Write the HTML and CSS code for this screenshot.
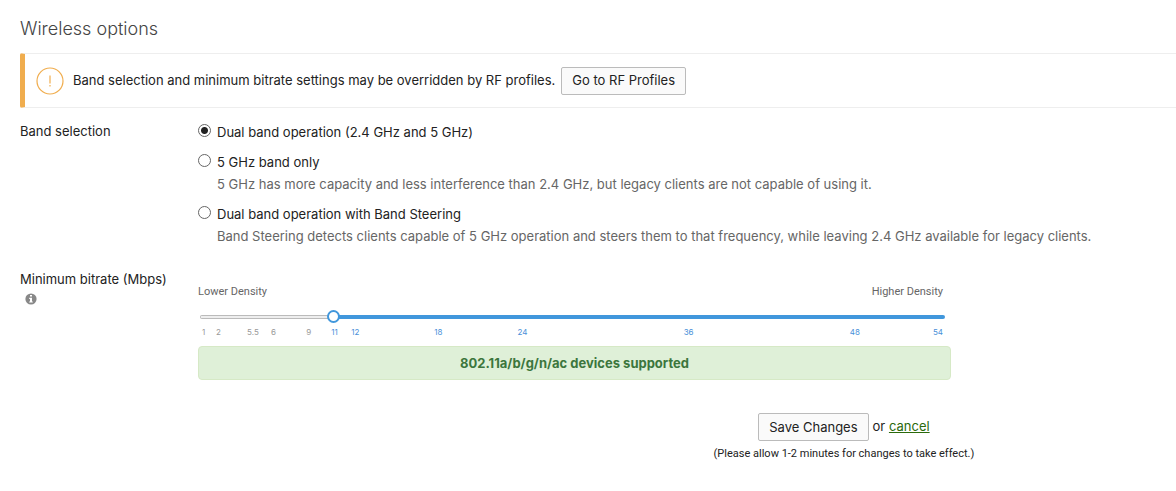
FILE: index.html
```html
<!DOCTYPE html>
<html lang="en">
<head>
    <meta charset="UTF-8">
    <meta name="viewport" content="width=device-width, initial-scale=1.0">
    <title>Wireless options</title>
    <link rel="stylesheet" href="styles.css">
</head>
<body>

    <h1>Wireless options</h1>

    <div class="notice">
        <svg class="notice-icon" viewBox="0 0 28 28" aria-hidden="true">
            <circle cx="14" cy="14" r="13" fill="none" stroke="#f0ad4e" stroke-width="1.2"/>
            <path d="M14 8.5v8M14 18v1.6" stroke="#f0ad4e" stroke-width="1.2"/>
        </svg>
        <span class="notice-text">Band selection and minimum bitrate settings may be overridden by RF profiles.</span>
        <button type="button" class="button">Go to RF Profiles</button>
    </div>

    <form class="options">
        <div class="row band-row">
            <div class="row-label" id="bandLabel">Band selection</div>
            <div class="band-list" role="radiogroup" aria-labelledby="bandLabel">
                <div class="band">
                    <input type="radio" name="band" id="bandDual" checked>
                    <label for="bandDual">Dual band operation (2.4 GHz and 5 GHz)</label>
                </div>
                <div class="band">
                    <input type="radio" name="band" id="bandFive">
                    <label for="bandFive">5 GHz band only</label>
                    <p class="help">5 GHz has more capacity and less interference than 2.4 GHz, but legacy clients are not capable of using it.</p>
                </div>
                <div class="band">
                    <input type="radio" name="band" id="bandSteering">
                    <label for="bandSteering">Dual band operation with Band Steering</label>
                    <p class="help">Band Steering detects clients capable of 5 GHz operation and steers them to that frequency, while leaving 2.4 GHz available for legacy clients.</p>
                </div>
            </div>
        </div>

        <div class="row">
            <div class="row-label">
                <label for="bitrate">Minimum bitrate (Mbps)</label>
                <svg class="info-icon" viewBox="0 0 12 12" aria-hidden="true">
                    <circle cx="6" cy="6" r="5.6" fill="#888"/>
                    <path d="M5 2h2v1.6H5zM4.2 4.8H7v3.6h.8v1.2H4.2V8.4H5V6h-.8z" fill="#fff"/>
                </svg>
            </div>
            <div class="bitrate">
                <div class="density">
                    <span>Lower Density</span>
                    <span>Higher Density</span>
                </div>
                <input type="range" class="slider" id="bitrate" min="2" max="54" value="11">
                <div class="ticks">
                    <span>1</span>
                    <span>2</span>
                    <span>5.5</span>
                    <span>6</span>
                    <span>9</span>
                    <span class="on">11</span>
                    <span class="on">12</span>
                    <span class="on">18</span>
                    <span class="on">24</span>
                    <span class="on">36</span>
                    <span class="on">48</span>
                    <span class="on">54</span>
                </div>
                <div class="supported">802.11a/b/g/n/ac devices supported</div>
            </div>
        </div>

        <div class="actions">
            <div class="actions-line">
                <button type="submit" class="button">Save Changes</button>
                <span>or <a href="#">cancel</a></span>
            </div>
            <div class="actions-note">(Please allow 1-2 minutes for changes to take effect.)</div>
        </div>
    </form>

</body>
</html>
```

FILE: styles.css
```css
* {
    box-sizing: border-box;
}

body {
    margin: 0;
    padding: 17px 0 16px 20px;
    background-color: #fff;
    color: #222;
    font-family: Inter, "Liberation Sans", sans-serif;
    font-size: 13px;
    line-height: 20px;
}

h1 {
    margin: 0 0 12px;
    color: #444;
    font-size: 18px;
    font-weight: 300;
    line-height: 24px;
}

.button {
    height: 28px;
    padding: 0 10px 1px;
    border: 1px solid #bbb;
    border-radius: 2px;
    background-color: #fafafa;
    color: #222;
    font: inherit;
    cursor: pointer;
}

/* Notice */
.notice {
    display: flex;
    align-items: center;
    min-height: 55px;
    padding-left: 11px;
    border: 1px solid #eee;
    border-left: 5px solid #f0ad4e;
    border-right: none;
    border-radius: 2px 0 0 2px;
}

.notice-icon {
    width: 28px;
    height: 28px;
    margin-right: 9px;
}

.notice-text {
    margin-right: 6px;
    padding-bottom: 2px;
}

/* Form rows */
.row {
    display: grid;
    grid-template-columns: 150px minmax(0, 1fr);
    column-gap: 28px;
}

.band-row {
    margin: 13px 0 22px;
}

.band-list {
    display: flex;
    flex-direction: column;
    gap: 8px;
}

.band {
    display: grid;
    grid-template-columns: 13px 1fr;
    column-gap: 6px;
    line-height: 22px;
}

.band input {
    appearance: none;
    width: 13px;
    height: 13px;
    margin: 3px 0 0;
    border: 1px solid #666;
    border-radius: 50%;
    background-color: #fff;
}

.band input:checked {
    background-image: radial-gradient(circle, #222 3px, transparent 4px);
}

.help {
    grid-column: 2;
    margin: 0;
    color: #666;
}

.info-icon {
    display: block;
    width: 12px;
    height: 12px;
    margin: 4px 0 0 5px;
}

/* Bitrate slider */
.bitrate {
    max-width: 753px;
    padding-top: 13px;
}

.density {
    display: flex;
    justify-content: space-between;
    padding-right: 8px;
    color: #666;
    font-family: Roboto, sans-serif;
    font-size: 11px;
}

.slider {
    appearance: none;
    display: block;
    width: calc(100% - 8px);
    height: 14px;
    margin: 8px 0 0 2px;
    background: none;
}

.slider::-webkit-slider-runnable-track {
    height: 4px;
    border-radius: 2px;
    background:
        linear-gradient(#eee, #eee) 1px 1px / 17% 2px no-repeat,
        linear-gradient(to right, #bbb 18%, #4197dc 18%);
}

.slider::-webkit-slider-thumb {
    appearance: none;
    width: 13px;
    height: 13px;
    margin-top: -5px;
    border: 2px solid #4197dc;
    border-radius: 50%;
    background-color: #fff;
}

.ticks {
    display: grid;
    grid-template-columns: 14fr 31fr 24fr 35fr 25fr 20fr 83fr 83fr 166fr 166fr 83fr 12fr;
    padding: 0 6px 0 4px;
    margin-top: 3px;
    color: #999;
    font-size: 8px;
    line-height: 10px;
}

.ticks .on {
    color: #4a90d9;
}

.supported {
    margin-top: 9px;
    padding: 6px;
    border: 1px solid #d6e9c6;
    border-radius: 4px;
    background-color: #dff0d8;
    color: #3c763d;
    font-weight: bold;
    text-align: center;
}

/* Save / cancel */
.actions {
    width: max-content;
    margin: 33px 0 0 60%;
    text-align: center;
}

.actions-line {
    display: flex;
    justify-content: center;
    gap: 4px;
    line-height: 26px;
}

.actions-note {
    margin-top: 3px;
    font-family: Roboto, sans-serif;
    font-size: 11px;
}

a {
    color: #2b6a0b;
}
```
